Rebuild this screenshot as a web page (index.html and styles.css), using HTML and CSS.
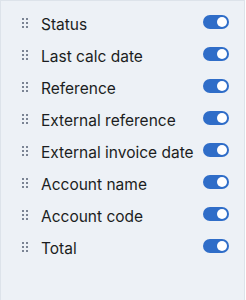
FILE: index.html
```html
<!DOCTYPE html>
<html>
<head>
<meta charset="utf-8">
<link rel="stylesheet" href="styles.css">
</head>
<body>
<div class="panel">
  <ul class="list">
    <li class="row"><span class="handle"><i></i><i></i><i></i><i></i><i></i><i></i></span><span class="label">Status</span><span class="toggle on"><span class="knob"></span></span></li>
    <li class="row"><span class="handle"><i></i><i></i><i></i><i></i><i></i><i></i></span><span class="label">Last calc date</span><span class="toggle on"><span class="knob"></span></span></li>
    <li class="row"><span class="handle"><i></i><i></i><i></i><i></i><i></i><i></i></span><span class="label">Reference</span><span class="toggle on"><span class="knob"></span></span></li>
    <li class="row"><span class="handle"><i></i><i></i><i></i><i></i><i></i><i></i></span><span class="label">External reference</span><span class="toggle on"><span class="knob"></span></span></li>
    <li class="row"><span class="handle"><i></i><i></i><i></i><i></i><i></i><i></i></span><span class="label">External invoice date</span><span class="toggle on"><span class="knob"></span></span></li>
    <li class="row"><span class="handle"><i></i><i></i><i></i><i></i><i></i><i></i></span><span class="label">Account name</span><span class="toggle on"><span class="knob"></span></span></li>
    <li class="row"><span class="handle"><i></i><i></i><i></i><i></i><i></i><i></i></span><span class="label">Account code</span><span class="toggle on"><span class="knob"></span></span></li>
    <li class="row"><span class="handle"><i></i><i></i><i></i><i></i><i></i><i></i></span><span class="label">Total</span><span class="toggle on"><span class="knob"></span></span></li>
  </ul>
</div>
</body>
</html>
```
FILE: styles.css
```css
html, body {
  margin: 0;
  padding: 0;
  background: #ffffff;
}
.panel {
  width: 245px;
  height: 300px;
  box-sizing: border-box;
  background: #edf1f6;
  border: 1px solid #dde3ea;
  border-bottom: none;
  font-family: Inter, "Liberation Sans", sans-serif;
}
.list {
  list-style: none;
  margin: 0;
  padding: 6px 15px 0 21px;
}
.row {
  display: flex;
  align-items: center;
  height: 32px;
}
.handle {
  display: grid;
  grid-template-columns: 2px 2px;
  grid-template-rows: 2px 2px 2px;
  column-gap: 2px;
  row-gap: 2px;
  width: 6px;
  margin-right: 13px;
}
.handle i {
  display: block;
  width: 2px;
  height: 2px;
  background: #7b8494;
}
.label {
  flex: 1;
  font-size: 15.5px;
  color: #1b1d21;
  white-space: nowrap;
  padding-top: 2px;
}
.toggle {
  display: flex;
  align-items: center;
  justify-content: flex-end;
  width: 26px;
  height: 14px;
  box-sizing: border-box;
  padding: 2px;
  border-radius: 7px;
  background: #2f6dc8;
  margin-top: -2px;
}
.knob {
  width: 10px;
  height: 10px;
  border-radius: 50%;
  background: #ffffff;
}
```
